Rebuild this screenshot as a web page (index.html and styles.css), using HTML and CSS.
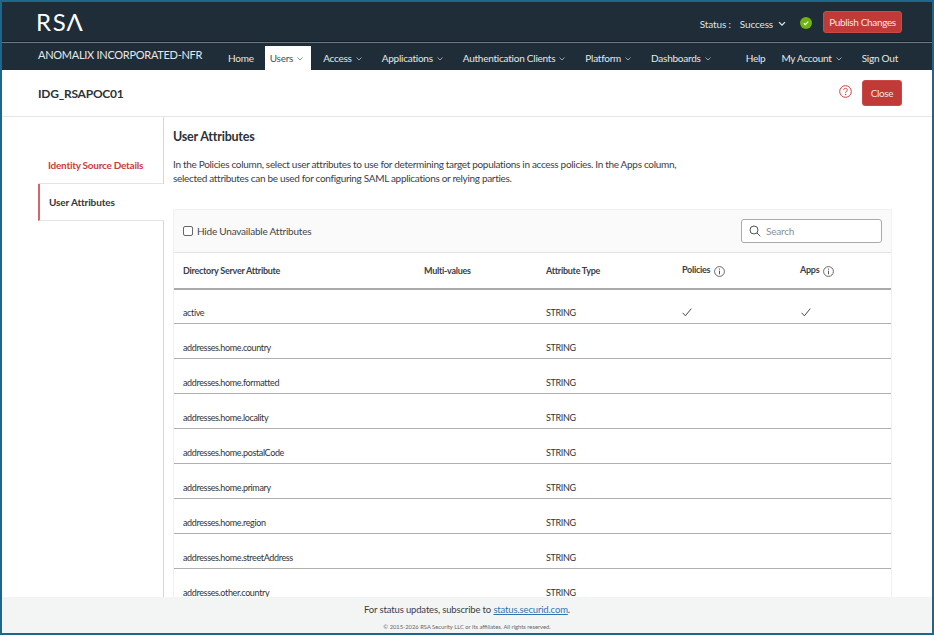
FILE: index.html
```html
<!DOCTYPE html>
<html lang="en">
<head>
<meta charset="utf-8">
<title>User Attributes</title>
<link rel="stylesheet" href="styles.css">
</head>
<body>
<div class="frame">
  <header class="topbar">
    <div class="logo">RS<span class="logo-a">Λ</span></div>
    <div class="status">
      <span class="status-label">Status :</span>
      <span class="status-value">Success</span>
      <svg class="status-chev" width="8" height="6" viewBox="0 0 8 6"><path d="M1 1.2 4 4.2 7 1.2" fill="none" stroke="#e8ecee" stroke-width="1.2"/></svg>
      <svg class="status-ok" width="12" height="12" viewBox="0 0 12 12"><circle cx="6" cy="6" r="6" fill="#6fb40f"/><path d="M3.8 6.2 5.3 7.6 8.2 4.6" fill="none" stroke="#fff" stroke-width="1.2"/></svg>
      <button class="btn publish">Publish Changes</button>
    </div>
  </header>
  <nav class="navbar">
    <div class="tenant">ANOMALIX INCORPORATED-NFR</div>
    <ul class="menu">
      <li class="item home">Home</li>
      <li class="item current">Users<svg class="chev" width="6" height="4" viewBox="0 0 6 4"><path d="M.5 .5 3 3 5.500 .5" fill="none" stroke="currentColor" stroke-width=".8"/></svg></li>
      <li class="item">Access<svg class="chev" width="6" height="4" viewBox="0 0 6 4"><path d="M.5 .5 3 3 5.500 .5" fill="none" stroke="currentColor" stroke-width=".8"/></svg></li>
      <li class="item">Applications<svg class="chev" width="6" height="4" viewBox="0 0 6 4"><path d="M.5 .5 3 3 5.500 .5" fill="none" stroke="currentColor" stroke-width=".8"/></svg></li>
      <li class="item">Authentication Clients<svg class="chev" width="6" height="4" viewBox="0 0 6 4"><path d="M.5 .5 3 3 5.500 .5" fill="none" stroke="currentColor" stroke-width=".8"/></svg></li>
      <li class="item">Platform<svg class="chev" width="6" height="4" viewBox="0 0 6 4"><path d="M.5 .5 3 3 5.500 .5" fill="none" stroke="currentColor" stroke-width=".8"/></svg></li>
      <li class="item">Dashboards<svg class="chev" width="6" height="4" viewBox="0 0 6 4"><path d="M.5 .5 3 3 5.500 .5" fill="none" stroke="currentColor" stroke-width=".8"/></svg></li>
      <li class="item help">Help</li>
      <li class="item">My Account<svg class="chev" width="6" height="4" viewBox="0 0 6 4"><path d="M.5 .5 3 3 5.500 .5" fill="none" stroke="currentColor" stroke-width=".8"/></svg></li>
      <li class="item signout">Sign Out</li>
    </ul>
  </nav>
  <div class="titlebar">
    <h1 class="page-title">IDG_RSAPOC01</h1>
    <div class="title-actions">
      <svg class="help-icon" width="13" height="13" viewBox="0 0 13 13"><circle cx="6.500" cy="6.500" r="5.800" fill="none" stroke="#c8403c" stroke-width="1"/><path d="M4.700 5.100C4.700 3.900 5.500 3.300 6.500 3.300 7.500 3.300 8.300 4 8.300 5 8.300 6.200 6.600 6.300 6.600 7.800" fill="none" stroke="#c8403c" stroke-width="1"/><circle cx="6.600" cy="9.500" r=".7" fill="#c8403c"/></svg>
      <button class="btn close">Close</button>
    </div>
  </div>
  <div class="workspace">
    <aside class="sidebar">
      <a class="tab tab-link">Identity Source Details</a>
      <a class="tab tab-active">User Attributes</a>
    </aside>
    <main class="content">
      <h2 class="section-title">User Attributes</h2>
      <p class="intro">In the Policies column, select user attributes to use for determining target populations in access policies. In the Apps column,<br>selected attributes can be used for configuring SAML applications or relying parties.</p>
      <section class="card">
        <div class="toolbar">
          <label class="hide-label"><span class="checkbox"></span>Hide Unavailable Attributes</label>
          <div class="search">
            <svg width="12" height="12" viewBox="0 0 12 12"><circle cx="5" cy="5" r="4" fill="none" stroke="#555" stroke-width="1"/><path d="M8 8 11.300 11.300" stroke="#555" stroke-width="1"/></svg>
            <span class="search-text">Search</span>
          </div>
        </div>
        <table class="attrs">
          <thead>
            <tr>
              <th class="col-name">Directory Server Attribute</th>
              <th class="col-multi">Multi-values</th>
              <th class="col-type">Attribute Type</th>
              <th class="col-pol"><span class="th-raised">Policies</span><svg class="info" width="11" height="11" viewBox="0 0 11 11"><circle cx="5.500" cy="5.500" r="4.900" fill="none" stroke="#444" stroke-width=".8"/><path d="M5.500 4.700V8.300" stroke="#444" stroke-width=".9"/><circle cx="5.500" cy="3.100" r=".6" fill="#444"/></svg></th>
              <th class="col-apps"><span class="th-raised">Apps</span><svg class="info" width="11" height="11" viewBox="0 0 11 11"><circle cx="5.500" cy="5.500" r="4.900" fill="none" stroke="#444" stroke-width=".8"/><path d="M5.500 4.700V8.300" stroke="#444" stroke-width=".9"/><circle cx="5.500" cy="3.100" r=".6" fill="#444"/></svg></th>
            </tr>
          </thead>
          <tbody>
            <tr class="first-row">
              <td>active</td><td></td><td>STRING</td>
              <td><svg class="tick" width="10" height="9" viewBox="0 0 10 9"><path d="M.6 4.800 3.400 7.800 9.300 .6" fill="none" stroke="#333" stroke-width=".9"/></svg></td>
              <td><svg class="tick" width="10" height="9" viewBox="0 0 10 9"><path d="M.6 4.800 3.400 7.800 9.300 .6" fill="none" stroke="#333" stroke-width=".9"/></svg></td>
            </tr>
            <tr><td>addresses.home.country</td><td></td><td>STRING</td><td></td><td></td></tr>
            <tr><td>addresses.home.formatted</td><td></td><td>STRING</td><td></td><td></td></tr>
            <tr><td>addresses.home.locality</td><td></td><td>STRING</td><td></td><td></td></tr>
            <tr><td>addresses.home.postalCode</td><td></td><td>STRING</td><td></td><td></td></tr>
            <tr><td>addresses.home.primary</td><td></td><td>STRING</td><td></td><td></td></tr>
            <tr><td>addresses.home.region</td><td></td><td>STRING</td><td></td><td></td></tr>
            <tr><td>addresses.home.streetAddress</td><td></td><td>STRING</td><td></td><td></td></tr>
            <tr><td>addresses.other.country</td><td></td><td>STRING</td><td></td><td></td></tr>
          </tbody>
        </table>
      </section>
    </main>
  </div>
  <footer class="footer">
    <p class="footer-status">For status updates, subscribe to <a class="footer-link">status.securid.com</a>.</p>
    <p class="footer-copy">© 2015-2026 RSA Security LLC or its affiliates. All rights reserved.</p>
  </footer>
</div>
</body>
</html>
```
FILE: styles.css
```css
* { box-sizing: border-box; }
html, body { margin: 0; height: 100%; }
body { font-family: Lato, "Liberation Sans", sans-serif; color: #333; background: #fff; overflow: hidden; }

.frame {
  width: 934px; height: 635px;
  border: 2px solid #1d668c;
  display: flex; flex-direction: column;
  background: #fff;
}

.topbar {
  height: 40px; flex: none;
  background: #1f2d38;
  border-bottom: 1px solid #151f27;
  display: flex; align-items: center; justify-content: space-between;
  padding: 0 30px 0 36px;
}
.logo { font-size: 24px; line-height: 1; color: #fff; letter-spacing: 1.7px; margin: 0 0 0 -2px; }
.logo-a { margin-left: -1px; }
.status { display: flex; align-items: center; color: #dfe4e7; font-size: 10px; letter-spacing: -.15px; }
.status-label { margin-right: 9px; margin-top: 5px; }
.status-value { margin-top: 5px; }
.status-chev { margin: 5px 0 0 5px; }
.status-ok { margin: 3px 0 0 14px; }
.publish { margin: 0 0 0 11px; height: 22px; padding: 0; width: 79px; }

.btn {
  background: #c03a38; color: #f6e3e2; border: 1px solid #c94a47; border-radius: 3px;
  font-family: inherit; font-size: 10px; letter-spacing: -.35px; white-space: nowrap;
}

.navbar {
  height: 28px; flex: none;
  background: #1f2d38;
  border-top: 1px solid #6d7880;
  display: flex; align-items: stretch;
  padding: 0 30px 0 36px;
  color: #e4e8ea;
}
.tenant { font-size: 11px; letter-spacing: -.28px; width: 185px; flex: none; padding-top: 5px; white-space: nowrap; }
.menu { list-style: none; margin: 0; padding: 3px 0 0; flex: 1; display: flex; align-items: stretch; font-size: 10px; letter-spacing: -.24px; }
.item { display: flex; align-items: center; padding: 0 5px; margin-right: 5px; white-space: nowrap; }
.item.home { margin-right: 6px; }
.chev { margin: 1px 5px 0 4px; opacity: .8; }
.item.current { background: #fff; color: #4a5157; margin-right: 7px; padding-right: 3px; }
.item.help { margin-left: 15px; margin-right: 6px; }
.item.signout { margin-left: auto; margin-right: 0; }

.titlebar {
  height: 47px; flex: none;
  border-bottom: 1px solid #e4e6e8;
  display: flex; align-items: center; justify-content: space-between;
  padding: 0 30px 0 36px;
}
.page-title { margin: 0; font-size: 12px; letter-spacing: -.25px; font-weight: 700; color: #2b3238; }
.title-actions { display: flex; align-items: center; gap: 10px; }
.help-icon { margin-bottom: 3px; }
.close { width: 40px; height: 26px; padding: 0; }

.workspace { flex: 1; min-height: 0; display: flex; overflow: hidden; padding-left: 36px; }

.sidebar { width: 126px; flex: none; border-right: 1px solid #d3d5d7; padding-top: 29px; }
.tab { display: flex; align-items: center; font-size: 10px; font-weight: 700; white-space: nowrap; }
.tab-link { height: 38px; color: #cc3b3b; letter-spacing: -.25px; padding: 13px 0 0 10px; border-bottom: 1px solid #e3e4e6; align-items: flex-start; }
.tab-active {
  height: 37px; color: #30373d; padding-left: 9px; letter-spacing: -.13px;
  background: #fff; margin-right: -1px;
  border-left: 2px solid #d9636a; border-bottom: 1px solid #e3e4e6;
}

.content { flex: 1; min-width: 0; padding: 0 0 0 9px; }
.section-title { margin: 11px 0 0; font-size: 12.500px; letter-spacing: -.2px; line-height: 17px; font-weight: 700; color: #2b3238; }
.intro { margin: 13px 0 0; font-size: 10px; letter-spacing: -.31px; line-height: 13.500px; color: #3a4046; }

.card { width: 719px; margin-top: 24px; border-left: 1px solid #f0f0f0; border-right: 1px solid #f0f0f0; }
.toolbar {
  height: 44px; background: #fafafa;
  border-top: 1px solid #eeeeee; border-bottom: 1px solid #e2e2e2; border-radius: 3px 3px 0 0;
  display: flex; align-items: center; justify-content: space-between;
  padding: 0 9px 0 9px;
}
.hide-label { display: flex; align-items: center; font-size: 10px; letter-spacing: -.22px; color: #3f464c; }
.checkbox { width: 10px; height: 10px; border: 1px solid #666; border-radius: 2px; background: #fff; margin-right: 4px; }
.search {
  width: 141px; height: 24px; background: #fff; border: 1px solid #aaa; border-radius: 3px;
  display: flex; align-items: center; gap: 5px; padding: 0 7px;
}
.search-text { font-size: 10px; letter-spacing: -.2px; color: #8a8f93; }

.attrs { width: 100%; border-collapse: collapse; table-layout: fixed; }
.attrs th, .attrs td { padding: 0 0 0 9px; text-align: left; vertical-align: bottom; }
.attrs th {
  height: 36px; font-size: 9px; letter-spacing: -.27px; font-weight: 700; color: #3a4046;
  border-bottom: 2px solid #aaaaaa; vertical-align: middle;
}
.attrs td { height: 35px; font-size: 9px; letter-spacing: -.36px; color: #333; border-bottom: 1px solid #b0b0b0; padding-bottom: 5px; }
.attrs .first-row td { height: 34px; }
.col-name { width: 241px; }
.col-multi { width: 122px; }
.col-type { width: 135px; }
.col-pol { width: 119px; }
.attrs .col-pol { padding-left: 10px; }
.th-raised { position: relative; top: -1px; }
.info { margin-left: 4px; vertical-align: -3px; }
.tick { vertical-align: -1px; margin-left: 1px; }

.footer {
  height: 36px; flex: none; background: #f3f5f5;
  text-align: center; color: #3a4046;
}
.footer-status { margin: 0; padding-top: 6px; font-size: 9.500px; letter-spacing: -.15px; line-height: 14px; }
.footer-link { color: #3274ae; text-decoration: underline; }
.footer-copy { margin: 5px 0 0; font-size: 5.800px; line-height: 9px; color: #666; }
```
